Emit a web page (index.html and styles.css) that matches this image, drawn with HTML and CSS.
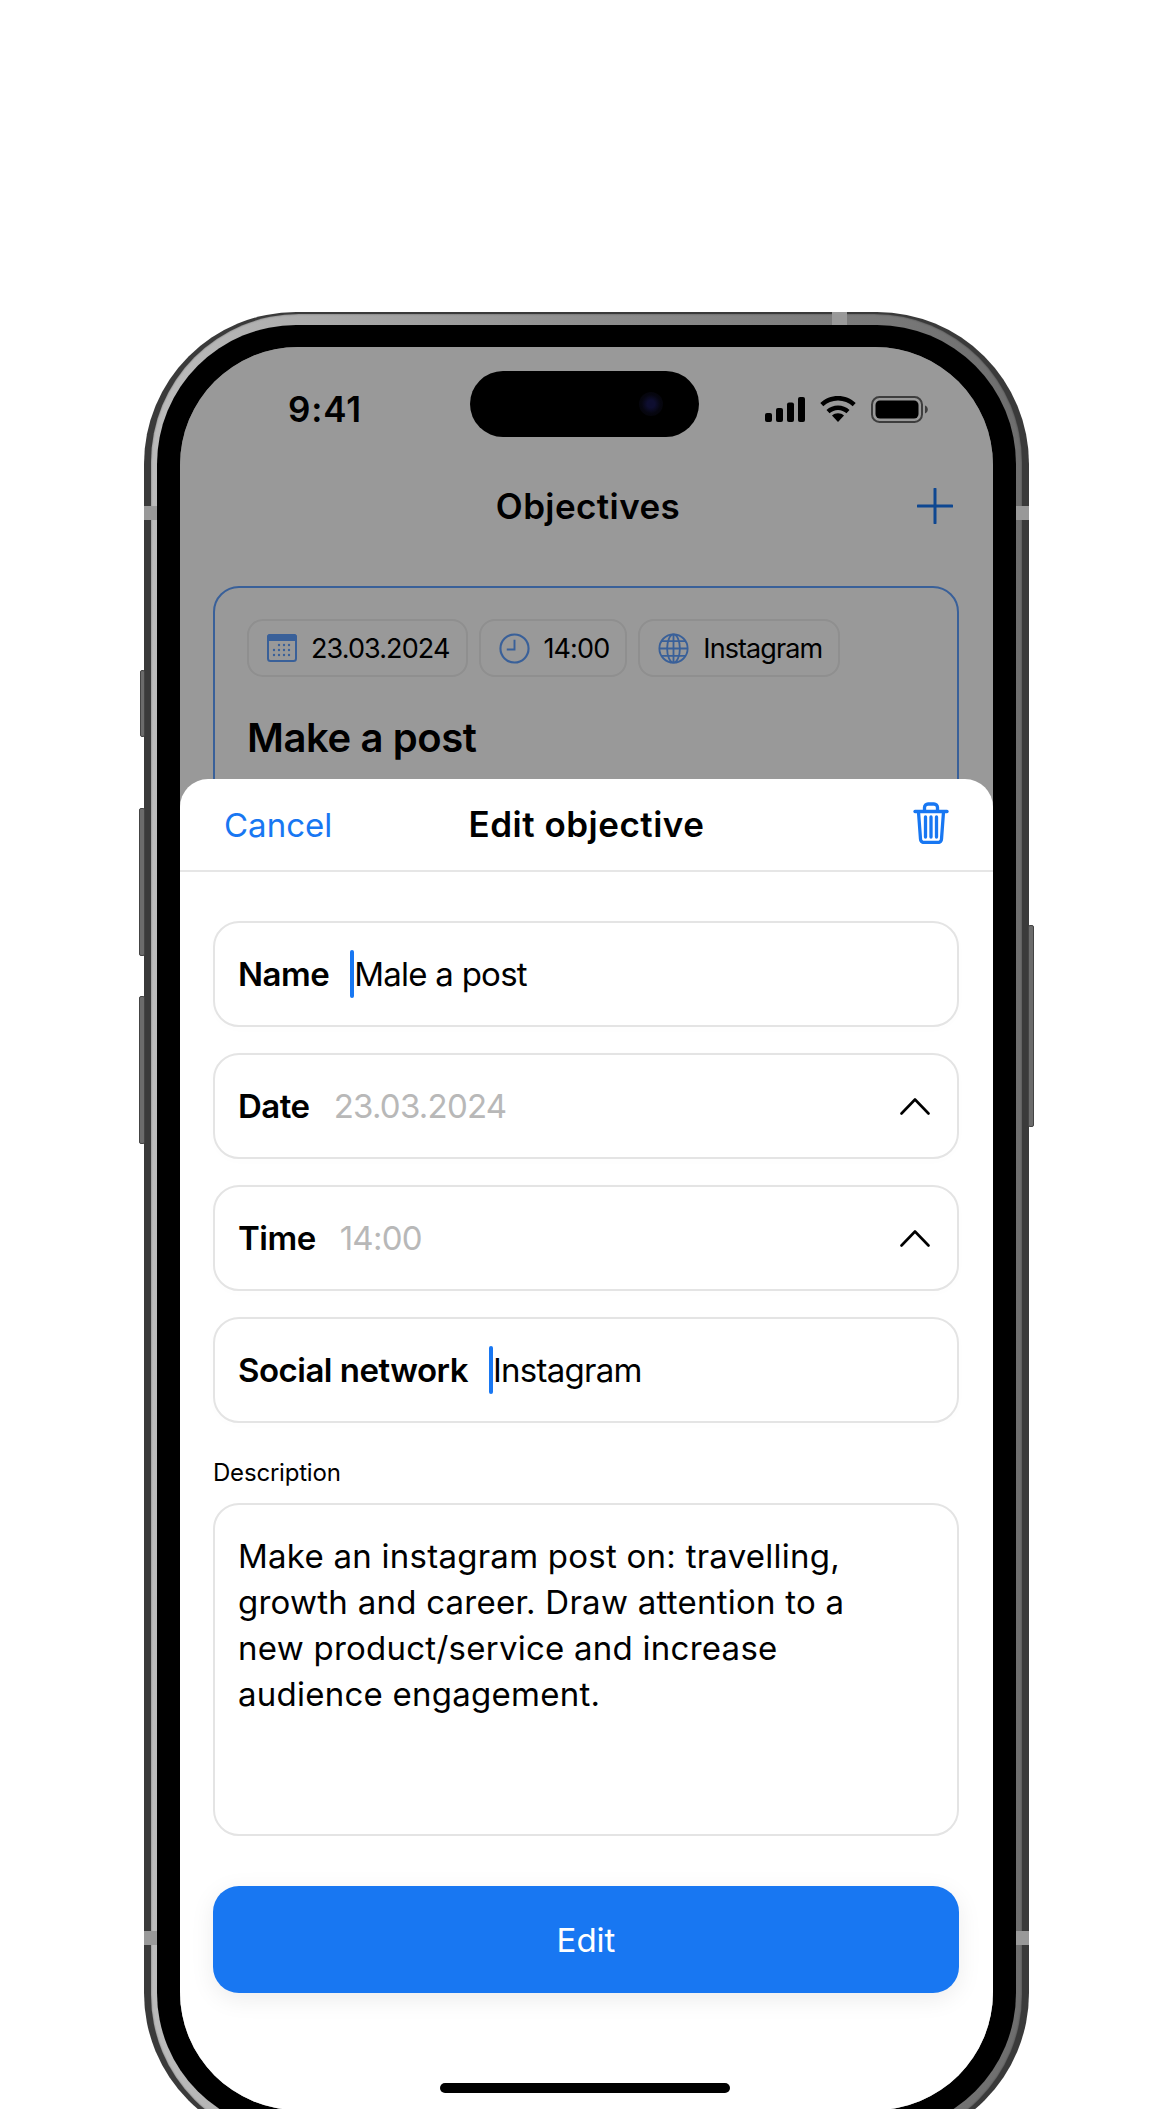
FILE: index.html
```html
<!DOCTYPE html>
<html lang="en">
<head>
<meta charset="utf-8">
<title>Edit objective</title>
<link rel="stylesheet" href="styles.css">
</head>
<body>
<div class="stage">
  <div class="device">
    <span class="btn btn-mute"></span>
    <span class="btn btn-up"></span>
    <span class="btn btn-down"></span>
    <span class="btn btn-power"></span>
    <div class="band">
      <div class="bezel">
        <div class="screen">
          <div class="status">
            <span class="time">9:41</span>
            <div class="status-icons">
              <svg class="i-signal" viewBox="0 0 40 25"><rect x="0" y="16" width="7" height="9" rx="2"/><rect x="11" y="11" width="7" height="14" rx="2"/><rect x="22" y="5.500" width="7" height="19.500" rx="2"/><rect x="33" y="0" width="7" height="25" rx="2"/></svg>
              <svg class="i-wifi" viewBox="0 0 36 26"><path d="M18 26l-6-6.600c3.400-3 8.600-3 12 0z"/><path d="M18 9.500c4.400 0 8.500 1.700 11.500 4.500l-3 3.300c-2.300-2-5.300-3.300-8.500-3.300s-6.200 1.300-8.500 3.300l-3-3.300c3-2.800 7.100-4.500 11.500-4.500z"/><path d="M18 0c6.800 0 13 2.600 17.700 7l-3 3.300C28.800 6.700 23.700 4.500 18 4.500S7.200 6.700 3.300 10.300l-3-3.300C5 2.600 11.200 0 18 0z"/></svg>
              <svg class="i-batt" viewBox="0 0 57 27"><rect x="1" y="1" width="50" height="25" rx="7.500" fill="none" stroke="#666" stroke-width="2"/><rect x="4.500" y="4.500" width="43" height="18" rx="4.500"/><path d="M54 9.500c1.700.6 2.800 2.200 2.800 4s-1.100 3.400-2.800 4z" fill="#666"/></svg>
            </div>
          </div>
          <div class="nav">
            <h1 class="nav-title">Objectives</h1>
            <svg class="i-plus" viewBox="0 0 36 36"><path d="M18 1v34M1 18h34"/></svg>
          </div>
          <div class="card">
            <div class="chips">
              <div class="chip">
                <svg class="i-cal" viewBox="0 0 30 28"><rect x="1" y="1" width="28" height="26" rx="2.500" fill="none" stroke="#60a0ff" stroke-width="2"/><path d="M3 0h24a3 3 0 0 1 3 3v4H0V3a3 3 0 0 1 3-3z" fill="#60a0ff"/><g fill="#60a0ff"><circle cx="12" cy="11" r="1.200"/><circle cx="17" cy="11" r="1.200"/><circle cx="22" cy="11" r="1.200"/><circle cx="7" cy="16" r="1.200"/><circle cx="12" cy="16" r="1.200"/><circle cx="17" cy="16" r="1.200"/><circle cx="22" cy="16" r="1.200"/><circle cx="7" cy="21" r="1.200"/><circle cx="12" cy="21" r="1.200"/><circle cx="17" cy="21" r="1.200"/><circle cx="22" cy="21" r="1.200"/></g></svg>
                <span>23.03.2024</span>
              </div>
              <div class="chip">
                <svg class="i-clock" viewBox="0 0 32 32"><circle cx="16" cy="16" r="14.500" fill="none" stroke="#60a0ff" stroke-width="2.200"/><path d="M16 7v10H8" fill="none" stroke="#60a0ff" stroke-width="2"/></svg>
                <span>14:00</span>
              </div>
              <div class="chip">
                <svg class="i-globe" viewBox="0 0 34 34" fill="none" stroke="#60a0ff" stroke-width="2"><circle cx="17" cy="17" r="15.500"/><ellipse cx="17" cy="17" rx="7" ry="15.500"/><path d="M17 1.500v31M1.500 17h31M4 9h26M4 25h26"/></svg>
                <span>Instagram</span>
              </div>
            </div>
            <h2 class="card-title">Make a post</h2>
          </div>
          <div class="scrim"></div>
          <div class="island"><span class="camera"></span></div>
          <div class="sheet">
            <header class="sheet-head">
              <span class="cancel">Cancel</span>
              <span class="sheet-title">Edit objective</span>
              <svg class="i-trash" viewBox="0 0 36 42" fill="none" stroke="#1877f2" stroke-width="3.300" stroke-linecap="round" stroke-linejoin="round"><path d="M2 9.500h32"/><path d="M11.500 9V5.500a3.500 3.500 0 0 1 3.500-3.500h6a3.500 3.500 0 0 1 3.500 3.500V9"/><path d="M5.500 10l2 27a3.500 3.500 0 0 0 3.500 3.500h14a3.500 3.500 0 0 0 3.500-3.500l2-27"/><path d="M12.500 15v20M18 15v20M23.500 15v20"/></svg>
            </header>
            <div class="form">
              <div class="field">
                <span class="label">Name</span>
                <span class="caret"></span>
                <span class="value">Male a post</span>
              </div>
              <div class="field">
                <span class="label">Date</span>
                <span class="value muted">23.03.2024</span>
                <svg class="chev" viewBox="0 0 30 18"><path d="M1.500 16.500L15 2.500l13.500 14"/></svg>
              </div>
              <div class="field">
                <span class="label">Time</span>
                <span class="value muted">14:00</span>
                <svg class="chev" viewBox="0 0 30 18"><path d="M1.500 16.500L15 2.500l13.500 14"/></svg>
              </div>
              <div class="field">
                <span class="label">Social network</span>
                <span class="caret"></span>
                <span class="value">Instagram</span>
              </div>
              <div class="desc-group">
                <span class="desc-label">Description</span>
                <div class="desc-box">Make an instagram post on: travelling, growth and career. Draw attention to a new product/service and increase audience engagement.</div>
              </div>
              <div class="submit">Edit</div>
            </div>
            <span class="home-bar"></span>
          </div>
        </div>
      </div>
    </div>
    <span class="notch notch-tl"></span>
    <span class="notch notch-bl"></span>
    <span class="notch notch-tr"></span>
    <span class="notch notch-br"></span>
    <span class="notch notch-top"></span>
  </div>
</div>
</body>
</html>
```

FILE: styles.css
```css
* { box-sizing: border-box; }
html, body { margin: 0; background: #fff; }
body { font-family: Inter, "Liberation Sans", sans-serif; color: #000; }
h1, h2 { margin: 0; }

.stage { height: 2109px; overflow: hidden; padding: 312px 0 0 144px; }

.device {
  position: relative;
  width: 885px;
  height: 1833px;
  padding: 2px 7px;
  border-radius: 152px;
  background: #3a3a3a;
}
.band {
  height: 100%;
  padding: 11px 6px;
  border-radius: 148px;
  background: linear-gradient(90deg, #bcbcbc 0%, #8e8e8e 50%, #6e6e6e 100%);
  box-shadow: inset 0 0 2px rgba(0,0,0,.45);
}
.bezel {
  height: 100%;
  padding: 22px 23px;
  border-radius: 139px;
  background: #000;
}
.screen {
  position: relative;
  height: 100%;
  overflow: hidden;
  border-radius: 118px;
  background: #fff;
}

.btn { position: absolute; background: #6b6b6b; border: 1px solid #444; border-radius: 2px; }
.btn-mute { left: -4px; top: 358px; width: 5px; height: 67px; }
.btn-up { left: -5px; top: 496px; width: 6px; height: 148px; }
.btn-down { left: -5px; top: 684px; width: 6px; height: 148px; }
.btn-power { right: -5px; top: 613px; width: 6px; height: 202px; }

.notch { position: absolute; background: #999; }
.notch-tl { left: 0; top: 194px; width: 13px; height: 14px; }
.notch-bl { left: 0; top: 1619px; width: 13px; height: 14px; }
.notch-tr { right: 0; top: 194px; width: 13px; height: 14px; }
.notch-br { right: 0; top: 1619px; width: 13px; height: 14px; }
.notch-top { left: 688px; top: 0; width: 15px; height: 13px; }

.status {
  display: flex;
  align-items: center;
  justify-content: space-between;
  height: 124px;
  padding: 0 65px 0 108px;
}
.time { font-size: 35px; font-weight: 600; line-height: 1; letter-spacing: .8px; }
.status-icons { display: flex; align-items: center; gap: 15px; }
.i-signal { width: 40px; height: 25px; }
.i-wifi { width: 36px; height: 26px; }
.i-batt { width: 57px; height: 27px; }

.nav { position: relative; height: 70px; display: flex; align-items: center; justify-content: center; }
.nav-title { font-size: 35px; font-weight: 600; line-height: 1; padding-left: 3px; letter-spacing: .4px; }
.i-plus { position: absolute; right: 40px; top: 17px; width: 36px; height: 36px; fill: none; stroke: #1877f2; stroke-width: 3; stroke-linecap: round; }

.card {
  margin: 45px 34px 0 33px;
  height: 400px;
  padding: 31px 32px;
  border: 2px solid #60a0ff;
  border-radius: 26px;
  background: #fff;
}
.chips { display: flex; gap: 11px; }
.chip {
  display: flex;
  align-items: center;
  gap: 14px;
  height: 58px;
  padding: 0 16px 0 18px;
  border: 2px solid #eee;
  border-radius: 16px;
  font-size: 27px;
  letter-spacing: -.9px;
}
.i-cal { width: 30px; height: 28px; }
.i-clock { width: 31px; height: 31px; }
.i-globe { width: 31px; height: 31px; }
.card-title { margin-top: 37px; font-size: 40px; font-weight: 600; line-height: 1.2; letter-spacing: -.4px; }

.scrim { position: absolute; inset: 0; background: rgba(0,0,0,.4); }
.island {
  position: absolute;
  left: 290px; top: 24px;
  width: 229px; height: 66px;
  border-radius: 33px;
  background: #000;
}
.camera {
  position: absolute;
  right: 36px; top: 21px;
  width: 24px; height: 24px;
  border-radius: 50%;
  background: radial-gradient(circle, #0e0e30 0 22%, #060610 55%, #030305 100%);
}

.sheet {
  position: absolute;
  left: 0; right: 0; top: 432px; bottom: 0;
  border-radius: 28px 28px 0 0;
  background: #fff;
}
.sheet-head {
  position: relative;
  display: flex;
  align-items: center;
  justify-content: center;
  height: 93px;
  border-bottom: 2px solid #e6e6e6;
  padding-bottom: 1px;
}
.cancel { position: absolute; left: 44px; top: 26px; font-size: 33px; line-height: 40px; color: #1877f2; }
.sheet-title { font-size: 35px; font-weight: 600; line-height: 40px; letter-spacing: .5px; }
.i-trash { position: absolute; right: 44px; top: 23px; width: 36px; height: 42px; }

.form { display: flex; flex-direction: column; gap: 26px; padding: 49px 34px 0 33px; }
.field {
  display: flex;
  align-items: center;
  height: 106px;
  padding: 0 27px 0 23px;
  border: 2px solid #e4e4e4;
  border-radius: 26px;
  font-size: 33px;
  box-shadow: 0 2px 14px rgba(0,0,0,.012);
}
.label { font-weight: 600; margin-right: 24px; white-space: nowrap; letter-spacing: -.5px; }
.value { white-space: nowrap; letter-spacing: -.75px; }
.muted { color: #b8b8b8; }
.caret { width: 4px; height: 48px; margin-left: -3px; border-radius: 2px; background: #1877f2; }
.chev { margin-left: auto; width: 30px; height: 18px; fill: none; stroke: #000; stroke-width: 2.600; stroke-linecap: round; stroke-linejoin: round; }

.desc-group { display: flex; flex-direction: column; gap: 15px; margin-top: 9px; }
.desc-label { font-size: 24px; line-height: 30px; letter-spacing: -.2px; }
.desc-box {
  height: 333px;
  padding: 28px 60px 26px 23px;
  border: 2px solid #e4e4e4;
  border-radius: 26px;
  font-size: 33px;
  line-height: 46px;
  letter-spacing: .25px;
}

.submit {
  display: flex;
  align-items: center;
  justify-content: center;
  height: 107px;
  margin-top: 24px;
  border-radius: 26px;
  background: #1877f2;
  color: #fff;
  font-size: 33px;
  box-shadow: 0 6px 24px rgba(0,0,0,.08);
}
.home-bar {
  position: absolute;
  left: 260px; top: 1304px;
  width: 290px; height: 10px;
  border-radius: 5px;
  background: #000;
}
```
